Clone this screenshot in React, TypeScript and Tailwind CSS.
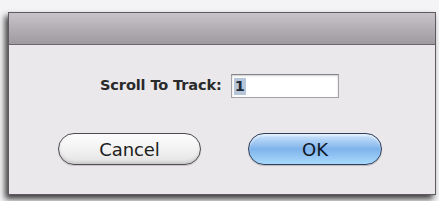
import React from "react";

export default function App() {
  return (
    <div
      className="w-[439px] h-[201px] bg-[#f4f3f5] overflow-hidden pl-[8px] pt-[12px]"
      style={{ fontFamily: '"DejaVu Sans", "Liberation Sans", sans-serif' }}
    >
      <div className="w-[428px] h-[183px] flex flex-col border border-[#5e5a5f] bg-[#ebe8ec] shadow-[-3px_4px_6px_rgba(0,0,0,0.75)]">
        <div className="h-[32px] shrink-0 bg-gradient-to-b from-[#c7c3c8] to-[#9e9aa0] border-b border-[#6a666b]" />
        <div className="flex-1 flex flex-col">
          <div className="flex items-center pl-[91px] pt-[29px]">
            <span className="text-[14.5px] text-[#2a2a2a] font-semibold tracking-[-0.1px]">Scroll To Track:</span>
            <div className="ml-[9px] w-[108px] h-[24px] bg-white border border-[#a4a2a5] border-t-[#858387] shadow-[inset_0_1px_2px_rgba(0,0,0,0.2)] flex items-center pl-[2px]">
              <span className="bg-[#b6c6d8] text-[14.5px] leading-[17px] text-[#1d2a3a] font-semibold px-[1px]">1</span>
            </div>
          </div>
          <div className="flex items-center pl-[49px] pt-[35px] gap-[47px]">
            <button className="w-[143px] h-[32px] rounded-full border-[1.5px] border-[#4e4c50] bg-gradient-to-b from-[#fdfdfd] via-[#f2f2f2] to-[#e3e3e3] shadow-[inset_0_-2px_3px_rgba(0,0,0,0.12),0_1px_1px_rgba(0,0,0,0.15)] flex items-center justify-center">
              <span className="text-[18px] text-[#1c1c1c] tracking-[-0.1px]">Cancel</span>
            </button>
            <button className="w-[134px] h-[32px] rounded-full border-[1.5px] border-[#2f3f5c] bg-gradient-to-b from-[#cfe6fb] via-[#7fb3ec] to-[#a9dafc] shadow-[inset_0_2px_2px_rgba(255,255,255,0.5),0_1px_1px_rgba(0,0,0,0.2)] flex items-center justify-center">
              <span className="text-[18px] text-[#101828] tracking-[-0.1px]">OK</span>
            </button>
          </div>
        </div>
      </div>
    </div>
  );
}
